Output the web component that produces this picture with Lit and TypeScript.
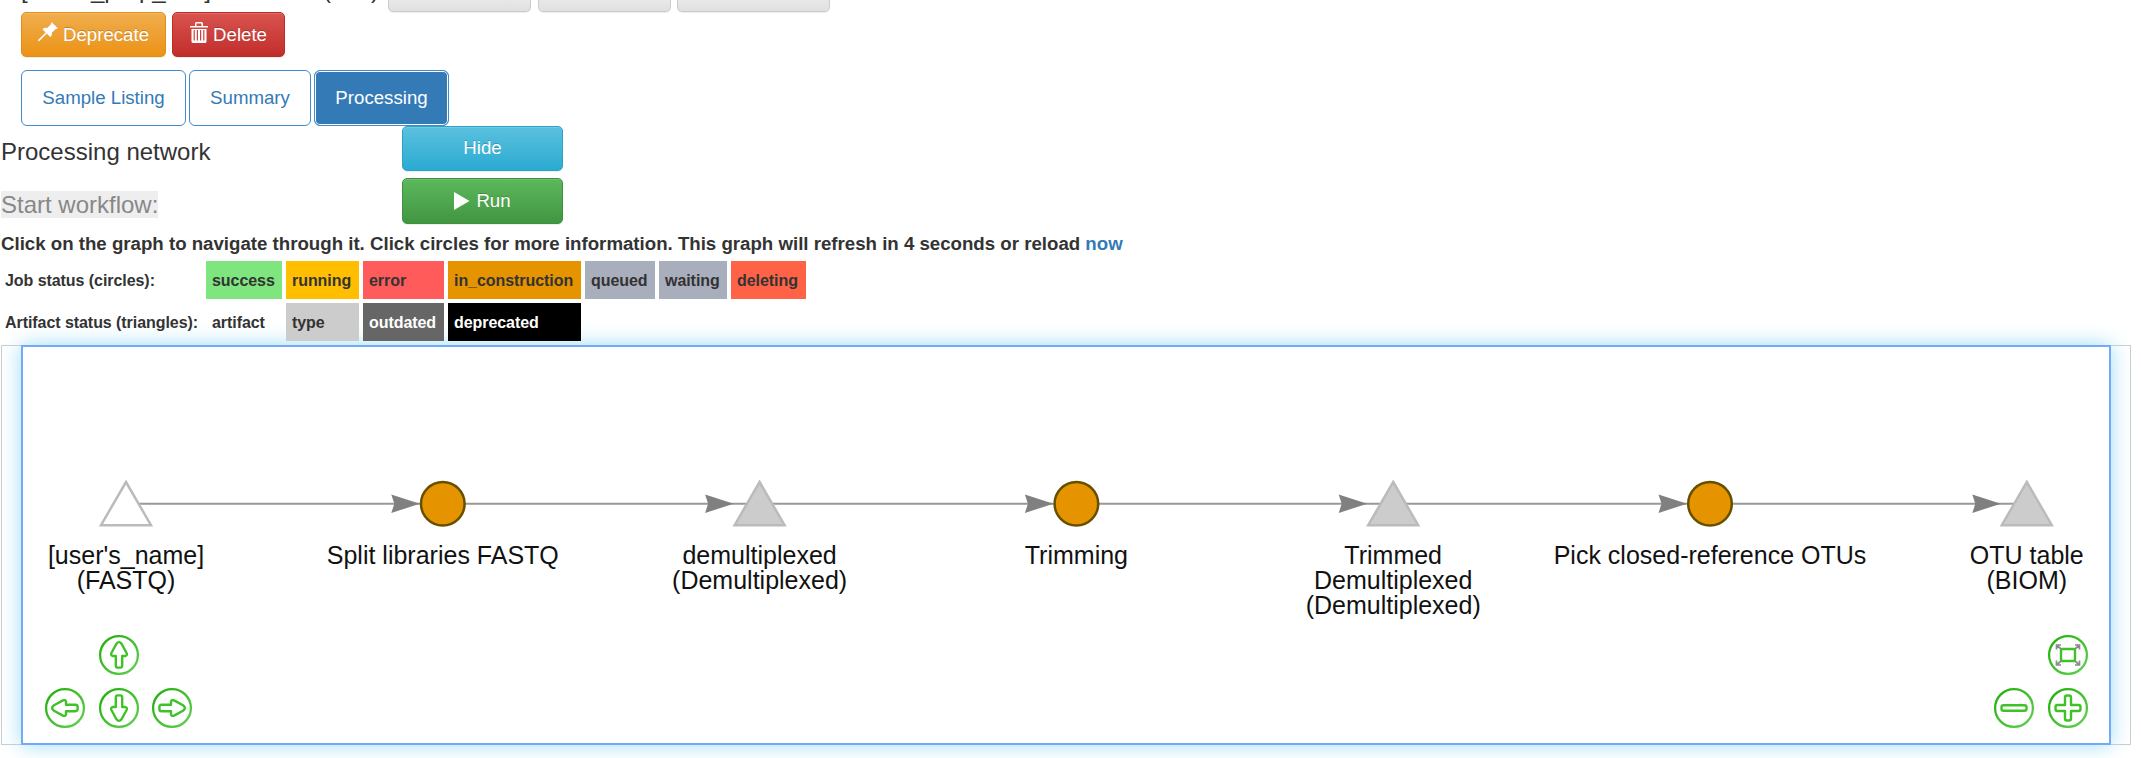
import { LitElement, html, svg, css } from "lit";
import { customElement } from "lit/decorators.js";

interface GraphNode { x: number; kind: "job" | "artifact" | "type"; lines: string[]; }

const NODES: GraphNode[] = [
  { x: 126, kind: "artifact", lines: ["[user's_name]", "(FASTQ)"] },
  { x: 442.8, kind: "job", lines: ["Split libraries FASTQ"] },
  { x: 759.6, kind: "type", lines: ["demultiplexed", "(Demultiplexed)"] },
  { x: 1076.4, kind: "job", lines: ["Trimming"] },
  { x: 1393.2, kind: "type", lines: ["Trimmed", "Demultiplexed", "(Demultiplexed)"] },
  { x: 1710, kind: "job", lines: ["Pick closed-reference OTUs"] },
  { x: 2026.8, kind: "type", lines: ["OTU table", "(BIOM)"] },
];

@customElement("status-legend")
export class StatusLegend extends LitElement {
  static styles = css`
    :host { display: block; }
    .grid {
      display: grid;
      grid-template-columns: 201px 76px 73px 81px 133px 70px 68px 75px;
      grid-auto-rows: 38px;
      column-gap: 4px;
      row-gap: 4px;
      padding-left: 1px;
      font: bold 16px/39px "Liberation Sans", Arial, sans-serif;
      letter-spacing: -0.06px;
      color: #333;
    }
    .cell { padding-left: 6px; white-space: nowrap; }
    .label { padding-left: 4px; white-space: nowrap; }
    .success { background: #7fe57f; }
    .running { background: #ffbf00; }
    .error { background: #ff5b5b; }
    .building { background: #e59400; }
    .idle { background: #a9aebc; }
    .deleting { background: #ff6347; }
    .artifact { grid-column: 2; }
    .type { background: #ccc; }
    .outdated { background: #666; color: #fff; }
    .deprecated { background: #000; color: #fff; }
  `;
  render() {
    return html`<div class="grid">
      <div class="label">Job status (circles):</div>
      <div class="cell success">success</div>
      <div class="cell running">running</div>
      <div class="cell error">error</div>
      <div class="cell building">in_construction</div>
      <div class="cell idle">queued</div>
      <div class="cell idle">waiting</div>
      <div class="cell deleting">deleting</div>
      <div class="label">Artifact status (triangles):</div>
      <div class="cell artifact">artifact</div>
      <div class="cell type">type</div>
      <div class="cell outdated">outdated</div>
      <div class="cell deprecated">deprecated</div>
    </div>`;
  }
}

@customElement("network-graph")
export class NetworkGraph extends LitElement {
  static styles = css`
    :host { display: block; }
    .frame {
      box-sizing: border-box;
      width: 2130px;
      height: 400px;
      margin-left: 1px;
      border: 1px solid #ccc;
      padding: 0 19px;
    }
    .canvas {
      box-sizing: border-box;
      width: 2090px;
      height: 400px;
      margin-top: -1px;
      border: 2px solid #72aaf8;
      background: #fff;
      box-shadow: 0 0 20px #9ddcf5;
    }
    svg { display: block; }
    .name { font: 25px "Liberation Sans", Arial, sans-serif; fill: #111; text-anchor: middle; }
    .edge { stroke: #999; stroke-width: 2; }
    .tip { fill: #808080; }
    .job { fill: #e59400; stroke: #665000; stroke-width: 2.5; }
    .type { fill: #ccc; stroke: #bbb; stroke-width: 2.5; }
    .artifact { fill: #fff; stroke: #bbb; stroke-width: 2.5; }
    .nav { fill: none; stroke: url(#green); stroke-width: 2.3; }
    .glyph { fill: none; stroke: #3fc128; stroke-width: 2.4; stroke-linejoin: round; }
    .corner { fill: none; stroke: #8b8b8b; stroke-width: 1.7; }
  `;

  edge(a: GraphNode, b: GraphNode) {
    const tip = b.x - (b.kind === "job" ? 23 : 26);
    return svg`<line class="edge" x1=${a.x} x2=${b.x} y1="503.7" y2="503.7"></line>
      <path class="tip" d=${`M${tip} 503.7 L${tip - 28.5} 494.5 L${tip - 25.5} 503.7 L${tip - 28.5} 513 Z`}></path>`;
  }

  node(n: GraphNode) {
    const shape = n.kind === "job"
      ? svg`<circle class="job" cx=${n.x} cy="503.7" r="21.8"></circle>`
      : svg`<path class=${n.kind} d=${`M${n.x} 482 L${n.x + 25} 525.2 L${n.x - 25} 525.2 Z`}></path>`;
    return svg`${shape}${n.lines.map((t, i) =>
      svg`<text class="name" x=${n.x} y=${563.5 + i * 25}>${t}</text>`)}`;
  }

  nav(x: number, y: number, glyph: unknown) {
    return svg`<g transform=${`translate(${x} ${y})`}><circle class="nav" r="18.9"></circle>${glyph}</g>`;
  }

  arrow(x: number, y: number, turn: number) {
    return this.nav(x, y, svg`<path class="glyph" transform=${`rotate(${turn})`}
      d="M-3.2 1 H-6.5 Q-8.6 .2 -7.6 -2 L-2.7 -11 Q0 -14.8 2.7 -11 L7.6 -2 Q8.6 .2 6.5 1 H3.2 V10.5 Q3.2 12.6 1.2 12.6 H-1.2 Q-3.2 12.6 -3.2 10.5 Z"></path>`);
  }

  render() {
    return html`<div class="frame"><div class="canvas">
      <svg width="2086" height="396" viewBox="23 347 2086 396">
        <defs><linearGradient id="green" x1="0" y1="0" x2="1" y2="1">
          <stop offset="0" stop-color="#1fae05"></stop><stop offset="1" stop-color="#62d154"></stop>
        </linearGradient></defs>
        ${NODES.slice(1).map((n, i) => this.edge(NODES[i], n))}
        ${NODES.map((n) => this.node(n))}
        ${this.arrow(119, 655, 0)}
        ${this.arrow(65, 708, -90)}
        ${this.arrow(119, 708, 180)}
        ${this.arrow(172, 708, 90)}
        ${this.nav(2068, 655, svg`<rect class="glyph" x="-7" y="-6" width="14" height="12" rx="1"></rect>
          <path class="corner" d="M-7 -6 L-11.5 -10 M-11.5 -5.5 V-10 H-7 M7 -6 L11.5 -10 M11.5 -5.5 V-10 H7 M-7 6 L-11.5 10 M-11.5 5.5 V10 H-7 M7 6 L11.5 10 M11.5 5.5 V10 H7"></path>`)}
        ${this.nav(2014, 708, svg`<rect class="glyph" x="-12.5" y="-2.8" width="25" height="5.6" rx="2"></rect>`)}
        ${this.nav(2068, 708, svg`<path class="glyph" d="M-3 -3 V-10.5 Q-3 -12.5 -1 -12.5 H1 Q3 -12.5 3 -10.5 V-3 H10.5 Q12.5 -3 12.5 -1 V1 Q12.5 3 10.5 3 H3 V10.5 Q3 12.5 1 12.5 H-1 Q-3 12.5 -3 10.5 V3 H-10.5 Q-12.5 3 -12.5 1 V-1 Q-12.5 -3 -10.5 -3 Z"></path>`)}
      </svg>
    </div></div>`;
  }
}

@customElement("app-root")
export class AppRoot extends LitElement {
  static styles = css`
    :host {
      display: block;
      height: 758px;
      overflow: hidden;
      background: #fff;
      color: #333;
      font: 18.67px/26.67px "Liberation Sans", Arial, sans-serif;
    }
    .top { display: flex; height: 12px; padding-left: 21px; align-items: flex-end; }
    .title { width: 367px; font-size: 24px; line-height: 26px; white-space: pre; margin-bottom: 9px; }
    .btn {
      box-sizing: border-box;
      display: flex;
      align-items: center;
      justify-content: center;
      height: 45px;
      border: 1px solid;
      border-radius: 5px;
      color: #fff;
      text-shadow: 0 -1px 0 rgba(0, 0, 0, .2);
      box-shadow: inset 0 1px 0 rgba(255, 255, 255, .15), 0 1px 1px rgba(0, 0, 0, .075);
      white-space: nowrap;
    }
    .grey { border-color: #ccc; background: linear-gradient(#fff, #e0e0e0); flex: none; }
    .g1 { width: 143px; margin-right: 7px; }
    .g2 { width: 133px; margin-right: 6px; }
    .g3 { width: 153px; }
    .actions { display: flex; gap: 6px; padding-left: 21px; }
    .deprecate { width: 145px; border-color: #e38d13; background: linear-gradient(#f0ad4e, #eb9316); }
    .delete { width: 113px; border-color: #b92c28; background: linear-gradient(#d9534f, #c12e2a); }
    .actions .btn { padding-top: 1px; }
    .ico { margin-right: 5px; flex: none; }
    .raised { margin-top: -6px; }
    .tabs { display: flex; gap: 3px; padding: 13px 0 0 21px; }
    .tab {
      box-sizing: border-box;
      height: 56px;
      border: 1px solid #428bca;
      border-radius: 6px;
      color: #337ab7;
      display: flex;
      align-items: center;
      justify-content: center;
      background: #fff;
    }
    .t1 { width: 165px; }
    .t2 { width: 122px; }
    .t3 { width: 135px; color: #fff; background: #337ab7; box-shadow: inset 0 0 0 1px #fff; }
    .tools { display: grid; grid-template-columns: 401px 161px; row-gap: 7px; padding-left: 1px; height: 105px; grid-auto-rows: 45px; }
    .heading { font-size: 24px; line-height: 27px; padding-top: 12px; }
    .muted { padding-top: 13px; color: #888; }
    .mark { background: #eee; }
    .hide { border-color: #28a4c9; background: linear-gradient(#5bc0de, #2aabd2); }
    .run { height: 46px; border-color: #3e8f3e; background: linear-gradient(#5cb85c, #419641); }
    .run .ico { margin-right: 6px; }
    .note { height: 30px; padding-left: 1px; font-weight: bold; line-height: 26px; white-space: nowrap; }
    .link { color: #337ab7; }
    .graph { margin-top: 4px; }
  `;
  render() {
    return html`
      <div class="top">
        <div class="title">[user's_prep_info] - ID 4059 (142)</div>
        <div class="btn grey g1"></div><div class="btn grey g2"></div><div class="btn grey g3"></div>
      </div>
      <div class="actions">
        <div class="btn deprecate">
          <svg class="ico raised" width="20" height="20" viewBox="0 0 20 20"><path fill="#fff" d="M13.6 0 L20 6.4 L17.8 7 L14 10.6 Q14.4 13.4 12.4 15.2 L8.8 11.6 L1.4 19 L0 19.2 L.3 17.8 L7.6 10.4 L4.4 7.2 Q6.4 5.4 9.2 6 L13 2.2 Z"></path></svg>Deprecate</div>
        <div class="btn delete">
          <svg class="ico raised" width="18" height="21" viewBox="0 0 18 21"><path fill="#fff" fill-rule="evenodd" d="M0 4 H5 V1.5 Q5 0 6.5 0 H11.5 Q13 0 13 1.5 V4 H18 V5.4 H0Z M6.5 1.6 V4 H11.5 V1.6Z M1.5 7 H16.5 V19.5 Q16.5 21 15 21 H3 Q1.5 21 1.5 19.5Z M3.6 8 V18.5 H4.8 V8Z M6.8 8 V18.5 H8 V8Z M10 8 V18.5 H11.2 V8Z M13.2 8 V18.5 H14.4 V8Z"></path></svg>Delete</div>
      </div>
      <div class="tabs">
        <div class="tab t1">Sample Listing</div><div class="tab t2">Summary</div><div class="tab t3">Processing</div>
      </div>
      <div class="tools">
        <div class="heading">Processing network</div>
        <div class="btn hide">Hide</div>
        <div class="heading muted"><span class="mark">Start workflow:</span></div>
        <div class="btn run"><svg class="ico" width="16" height="18" viewBox="0 0 16 18"><path fill="#fff" d="M0 0 L15.5 9 L0 18Z"></path></svg>Run</div>
      </div>
      <div class="note">Click on the graph to navigate through it. Click circles for more information. This graph will refresh in 4 seconds or reload <span class="link">now</span></div>
      <status-legend></status-legend>
      <network-graph class="graph"></network-graph>`;
  }
}
